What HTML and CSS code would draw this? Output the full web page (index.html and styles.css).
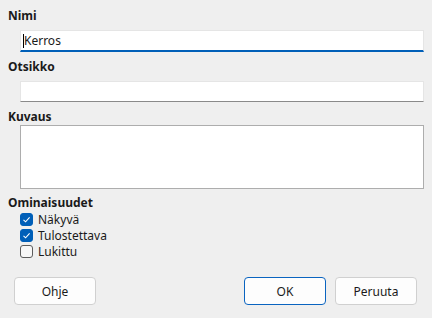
FILE: index.html
```html
<!DOCTYPE html>
<html>
<head>
  <title>Tason ominaisuudet</title>
  <link rel="stylesheet" href="styles.css">
</head>
<body>
  <div class="dialog">
    <div class="field-label">Nimi</div>
    <div class="edit focused"><span class="caret"></span>Kerros</div>

    <div class="field-label">Otsikko</div>
    <div class="edit"></div>

    <div class="field-label tight">Kuvaus</div>
    <div class="memo"></div>

    <div class="field-label props">Ominaisuudet</div>
    <div class="checks">
      <div class="check-row"><span class="box checked"><svg viewBox="0 0 13 13" width="13" height="13"><path d="M3.5 6.8 L5.6 8.8 L9.6 4.4" fill="none" stroke="#fff" stroke-width="1.1"/></svg></span>Näkyvä</div>
      <div class="check-row"><span class="box checked"><svg viewBox="0 0 13 13" width="13" height="13"><path d="M3.5 6.8 L5.6 8.8 L9.6 4.4" fill="none" stroke="#fff" stroke-width="1.1"/></svg></span>Tulostettava</div>
      <div class="check-row"><span class="box"></span>Lukittu</div>
    </div>

    <div class="buttons">
      <button class="btn">Ohje</button>
      <div class="spacer"></div>
      <button class="btn default">OK</button>
      <button class="btn">Peruuta</button>
    </div>
  </div>
</body>
</html>
```

FILE: styles.css
```css
body {
  margin: 0;
  background-color: #efefef;
  font-family: "Noto Sans", "Open Sans", sans-serif;
  font-size: 12px;
  color: #1a1a1a;
}

.dialog {
  padding: 8px 8px 0 8px;
}

.field-label {
  font-weight: bold;
  line-height: 16px;
  height: 16px;
  margin-bottom: 6px;
}

.field-label.tight {
  margin-bottom: 0;
}

.edit {
  margin-left: 12px;
  height: 19px;
  background-color: #fff;
  border: 1px solid #e5e5e5;
  border-bottom-color: #8a8a8a;
  line-height: 19px;
  padding-left: 3px;
  margin-bottom: 7px;
}

.edit.focused {
  height: 19px;
  border-bottom: 2px solid #005fb8;
  padding-left: 2px;
}

.caret {
  display: inline-block;
  width: 1px;
  height: 14px;
  background-color: #000;
  vertical-align: -3px;
}

.memo {
  margin-left: 12px;
  height: 62px;
  background-color: #fff;
  border: 1px solid #adadad;
  margin-bottom: 6px;
}

.props {
  margin-bottom: 0;
}

.checks {
  padding-left: 12px;
}

.check-row {
  display: flex;
  align-items: center;
  gap: 5px;
  height: 16px;
}

.box {
  width: 11px;
  height: 11px;
  border: 1px solid #5c5c5c;
  border-radius: 3px;
  background-color: #f7f7f7;
  position: relative;
}

.box.checked {
  background-color: #005fb8;
  border-color: #005fb8;
}

.box svg {
  position: absolute;
  left: -1px;
  top: -1px;
}

.buttons {
  display: flex;
  gap: 9px;
  margin-top: 18px;
  padding: 0 7px 0 6px;
}

.spacer {
  flex: 1;
}

.btn {
  width: 82px;
  height: 28px;
  background-color: #fdfdfd;
  border: 1px solid #d0d0d0;
  border-radius: 4px;
  font-family: inherit;
  font-size: 12px;
  color: #1a1a1a;
  padding: 0;
}

.btn.default {
  border-color: #0a64c0;
}
```
